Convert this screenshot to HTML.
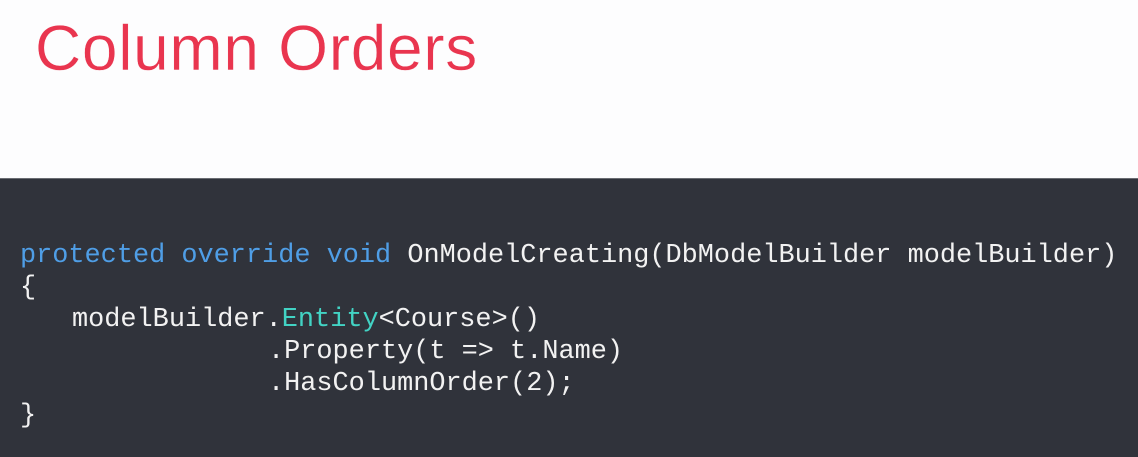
<!DOCTYPE html>
<html><head><style>
html,body{margin:0;padding:0}
body{width:1138px;height:456px;position:relative;background:#fdfdfe;overflow:hidden}
.t{position:absolute;left:35px;top:8px;font:64px "Liberation Sans",sans-serif;color:#e9354f;letter-spacing:0.7px;line-height:80px;-webkit-text-stroke:0.4px #fdfdfe}
.dark{position:absolute;left:0;top:178px;width:1138px;height:278px;background:#30333b;border-top:1px solid #6a6c72}
.l{position:absolute;font:26.9px "Liberation Mono",monospace;color:#f2f2f2;white-space:pre;line-height:32px}
.k{color:#4f9ee6}.c{color:#42d3c4}
</style></head><body>
<div class="t">Column Orders</div>
<div class="dark"></div>
<div class="l" style="left:20px;top:240px"><span class="k">protected</span> <span class="k">override</span> <span class="k">void</span> OnModelCreating(DbModelBuilder modelBuilder)</div>
<div class="l" style="left:20px;top:272px">{</div>
<div class="l" style="left:72px;top:304px">modelBuilder.<span class="c">Entity</span>&lt;Course&gt;()</div>
<div class="l" style="left:268px;top:336px">.Property(t =&gt; t.Name)</div>
<div class="l" style="left:268px;top:368px">.HasColumnOrder(2);</div>
<div class="l" style="left:20px;top:400px">}</div>
</body></html>
